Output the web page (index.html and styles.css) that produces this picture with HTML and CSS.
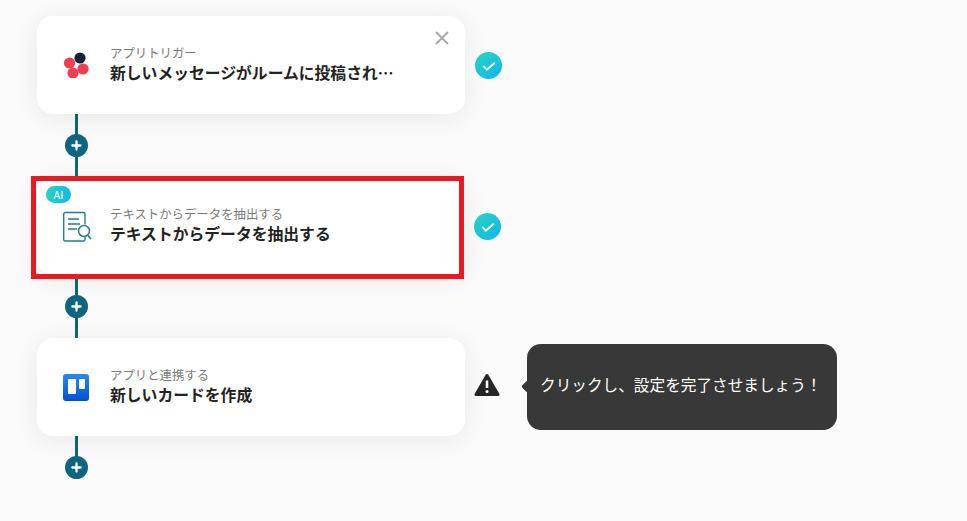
FILE: index.html
```html
<!DOCTYPE html>
<html lang="ja">
<head>
    <meta charset="utf-8">
    <title>フロー</title>
    <link rel="stylesheet" href="styles.css">
</head>
<body>
    <div class="flow">
        <div class="step">
            <div class="card">
                <svg class="card-icon" viewBox="0 0 26 26" width="26" height="26">
                    <circle cx="17" cy="6" r="5.600" fill="#14233c"/>
                    <circle cx="6.500" cy="11" r="5.600" fill="#f23d52"/>
                    <circle cx="20" cy="17" r="5.600" fill="#f23d52"/>
                    <circle cx="10" cy="21" r="5.600" fill="#f23d52"/>
                </svg>
                <div class="card-text">
                    <p class="card-label">アプリトリガー</p>
                    <p class="card-title">新しいメッセージがルームに投稿されたら</p>
                </div>
                <svg class="card-close" viewBox="0 0 14 14" width="14" height="14">
                    <path d="M1 1 13 13M13 1 1 13" stroke="#a6a6a6" stroke-width="1.800" fill="none"/>
                </svg>
            </div>
            <span class="check">
                <svg viewBox="0 0 27 27" width="27" height="27">
                    <path d="M8.300 14 11.800 17.700 19.800 10.800" stroke="#fff" stroke-width="1.800" fill="none"/>
                </svg>
            </span>
        </div>

        <div class="link"><span class="add">
            <svg viewBox="0 0 23 23" width="23" height="23"><path d="M7.400 11.500h8.200M11.500 7.400v8.200" stroke="#fff" stroke-width="2.300" stroke-linecap="round"/></svg>
        </span></div>

        <div class="step step-ai">
            <div class="card">
                <span class="ai-badge">AI</span>
                <svg class="card-icon" viewBox="0 0 29 32" width="29" height="32">
                    <path d="M22 26.500V29.500a1.500 1.500 0 0 1-1.500 1.500H2.200a1.500 1.500 0 0 1-1.500-1.500V4a1.500 1.500 0 0 1 1.500-1.500h18.300A1.500 1.500 0 0 1 22 4v10.500" stroke="#2a7a95" stroke-width="1.400" fill="none"/>
                    <path d="M5 9h11M5 14h12M5 19h9" stroke="#2a7a95" stroke-width="1.700" fill="none"/>
                    <circle cx="21" cy="21" r="5.500" stroke="#2a7a95" stroke-width="1.500" fill="#fff"/>
                    <path d="M24.800 25.300 28 29" stroke="#2a7a95" stroke-width="1.600" fill="none"/>
                </svg>
                <div class="card-text">
                    <p class="card-label">テキストからデータを抽出する</p>
                    <p class="card-title">テキストからデータを抽出する</p>
                </div>
                <div class="highlight"></div>
            </div>
            <span class="check">
                <svg viewBox="0 0 27 27" width="27" height="27">
                    <path d="M8.300 14 11.800 17.700 19.800 10.800" stroke="#fff" stroke-width="1.800" fill="none"/>
                </svg>
            </span>
        </div>

        <div class="link"><span class="add">
            <svg viewBox="0 0 23 23" width="23" height="23"><path d="M7.400 11.500h8.200M11.500 7.400v8.200" stroke="#fff" stroke-width="2.300" stroke-linecap="round"/></svg>
        </span></div>

        <div class="step">
            <div class="card">
                <svg class="card-icon" viewBox="0 0 26 27" width="26" height="27">
                    <defs>
                        <linearGradient id="trello" x1="0" y1="0" x2="0" y2="1">
                            <stop offset="0" stop-color="#2a87f5"/>
                            <stop offset="1" stop-color="#0052cc"/>
                        </linearGradient>
                    </defs>
                    <rect width="26" height="27" rx="3" fill="url(#trello)"/>
                    <rect x="5" y="5" width="8" height="15" rx="1" fill="#fff"/>
                    <rect x="16" y="5" width="6" height="10" rx="1" fill="#fff"/>
                </svg>
                <div class="card-text">
                    <p class="card-label">アプリと連携する</p>
                    <p class="card-title">新しいカードを作成</p>
                </div>
            </div>
            <svg class="warn" viewBox="0 0 26 24" width="26" height="24">
                <path d="M13 2.500 24 21.500H2Z" fill="#262626" stroke="#262626" stroke-width="3" stroke-linejoin="round"/>
                <path d="M13 7.500v7.500" stroke="#fff" stroke-width="2.600"/>
                <circle cx="13" cy="18.500" r="1.500" fill="#fff"/>
            </svg>
            <div class="tip">クリックし、設定を完了させましょう！</div>
        </div>

        <div class="link link-end"><span class="add">
            <svg viewBox="0 0 23 23" width="23" height="23"><path d="M7.400 11.500h8.200M11.500 7.400v8.200" stroke="#fff" stroke-width="2.300" stroke-linecap="round"/></svg>
        </span></div>
    </div>
</body>
</html>
```

FILE: styles.css
```css
body {
    margin: 0;
    background-color: #fafafa;
    font-family: "Noto Sans CJK JP", "Noto Sans", sans-serif;
    overflow: hidden;
}
p {
    margin: 0;
}
.flow {
    padding: 16px 0 0 37px;
}
.step {
    display: flex;
    align-items: center;
    height: 98px;
}
.card {
    position: relative;
    display: flex;
    align-items: center;
    box-sizing: border-box;
    width: 428px;
    height: 98px;
    padding: 0 0 0 26px;
    background: #fff;
    border-radius: 16px;
    box-shadow: 0 4px 24px rgba(0, 0, 0, 0.07);
}
.card-icon {
    flex: none;
    margin-right: 21px;
}
.step-ai .card-icon {
    margin-right: 18px;
}
.card-text {
    width: 290px;
    margin-top: -3px;
}
.card-label {
    margin-bottom: -1px;
    font-size: 12.4px;
    line-height: 18px;
    color: #7a7a7a;
}
.card-title {
    font-size: 15.8px;
    font-weight: 700;
    line-height: 23px;
    color: #222;
    white-space: nowrap;
    overflow: hidden;
    text-overflow: ellipsis;
}
.card-close {
    position: absolute;
    top: 15px;
    right: 16px;
}
.ai-badge {
    position: absolute;
    top: 9px;
    left: 9px;
    width: 25px;
    height: 17px;
    border-radius: 9px;
    background: linear-gradient(90deg, #26d3c4, #14b8e8);
    color: #fff;
    font-size: 11px;
    line-height: 17px;
    text-align: center;
}
.highlight {
    position: absolute;
    top: -1px;
    left: -6px;
    width: 423px;
    height: 93px;
    border: 5px solid #e8191f;
}
.check {
    display: block;
    width: 27px;
    height: 27px;
    margin: 1px 0 0 10px;
    border-radius: 50%;
    background: linear-gradient(135deg, #2bd6c0, #10b4ee);
}
.step-ai .check {
    margin-left: 9px;
}
.check svg {
    display: block;
}
.warn {
    flex: none;
    margin-left: 9px;
    margin-top: -4px;
}
.tip {
    position: relative;
    box-sizing: border-box;
    width: 310px;
    height: 86px;
    margin-left: 27px;
    padding-left: 13px;
    border-radius: 14px;
    background: #383838;
    color: #fff;
    font-size: 15.65px;
    line-height: 82px;
    white-space: nowrap;
}
.tip::before {
    content: "";
    position: absolute;
    top: 38px;
    left: -4px;
    width: 9px;
    height: 9px;
    border-radius: 2px;
    background: #383838;
    transform: rotate(45deg);
}
.link {
    display: flex;
    align-items: center;
    justify-content: center;
    width: 3px;
    height: 63px;
    margin-left: 38px;
    background: #0f6580;
}
.link-end {
    height: 43px;
    align-items: flex-end;
}
.add {
    flex: none;
    display: block;
    width: 23px;
    height: 23px;
    border-radius: 50%;
    background: #0f6580;
}
.add svg {
    display: block;
}
```
